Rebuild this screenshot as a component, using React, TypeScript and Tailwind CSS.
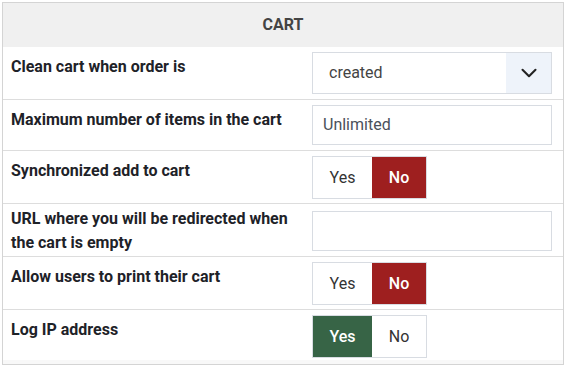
import React, { useState } from 'react';
import { ChevronDown } from 'lucide-react';

function Toggle({ value, onChange }: { value: boolean; onChange: (v: boolean) => void }) {
  return (
    <div className="flex h-[43px] w-[115px] border border-[#d8dce2] text-[16px]">
      <button
        onClick={() => onChange(true)}
        className={`flex w-[59px] items-center justify-center ${
          value ? 'bg-[#376446] font-medium text-white' : 'bg-white text-[#333]'
        }`}
      >
        Yes
      </button>
      <button
        onClick={() => onChange(false)}
        className={`flex flex-1 items-center justify-center ${
          !value ? 'bg-[#9e1f1f] font-medium text-white' : 'bg-white text-[#333]'
        }`}
      >
        No
      </button>
    </div>
  );
}

function Row({ label, children, h, pt = 'pt-[8px]' }: { label: React.ReactNode; children: React.ReactNode; h: string; pt?: string }) {
  return (
    <div className={`flex border-b border-[#dddddd] ${h}`}>
      <div className={`w-[309px] pl-[8px] pr-2 ${pt} text-[16px] leading-[24px] font-bold text-[#1e2228]`}>{label}</div>
      <div className="flex-1 pt-[5px]">{children}</div>
    </div>
  );
}

export default function App() {
  const [sync, setSync] = useState(false);
  const [print, setPrint] = useState(false);
  const [logIp, setLogIp] = useState(true);

  return (
    <div className="p-[2px] bg-white" style={{ fontFamily: 'Roboto, "Liberation Sans", sans-serif' }}>
      <div className="w-[562px] border border-[#d4d4d4] bg-white">
        <div className="flex h-[44px] items-center justify-center bg-[#f0f0f0] text-[16px] font-bold text-[#444]">
          CART
        </div>

        <Row label="Clean cart when order is" h="h-[53px]">
          <div className="flex h-[42px] w-[240px] border border-[#d8dce2]">
            <div className="flex flex-1 items-center pl-4 text-[16px] text-[#444]">created</div>
            <div className="flex w-[45px] items-center justify-center bg-[#eef3fa]">
              <ChevronDown size={26} strokeWidth={1.9} className="text-[#222]" />
            </div>
          </div>
        </Row>

        <Row label="Maximum number of items in the cart" h="h-[51px]">
          <div className="flex h-[40px] w-[240px] items-center border border-[#d8dce2] pl-[10px] text-[16px] text-[#4a505a]">
            Unlimited
          </div>
        </Row>

        <Row label="Synchronized add to cart" h="h-[53px]">
          <Toggle value={sync} onChange={setSync} />
        </Row>

        <Row label={<>URL where you will be redirected when<br />the cart is empty</>} h="h-[53px]" pt="pt-[3px]">
          <div className="mt-[2px] h-[40px] w-[240px] border border-[#d8dce2]" />
        </Row>

        <Row label="Allow users to print their cart" h="h-[53px]">
          <Toggle value={print} onChange={setPrint} />
        </Row>

        <div className="flex h-[54px] flex-col">
          <div className="flex flex-1">
            <div className="w-[309px] pl-[8px] pt-[8px] text-[16px] leading-[24px] font-bold text-[#1e2228]">Log IP address</div>
            <div className="flex-1 pt-[5px]">
              <Toggle value={logIp} onChange={setLogIp} />
            </div>
          </div>
          <div className="h-[4px] bg-[#f8f8f8]" />
        </div>
      </div>
    </div>
  );
}
